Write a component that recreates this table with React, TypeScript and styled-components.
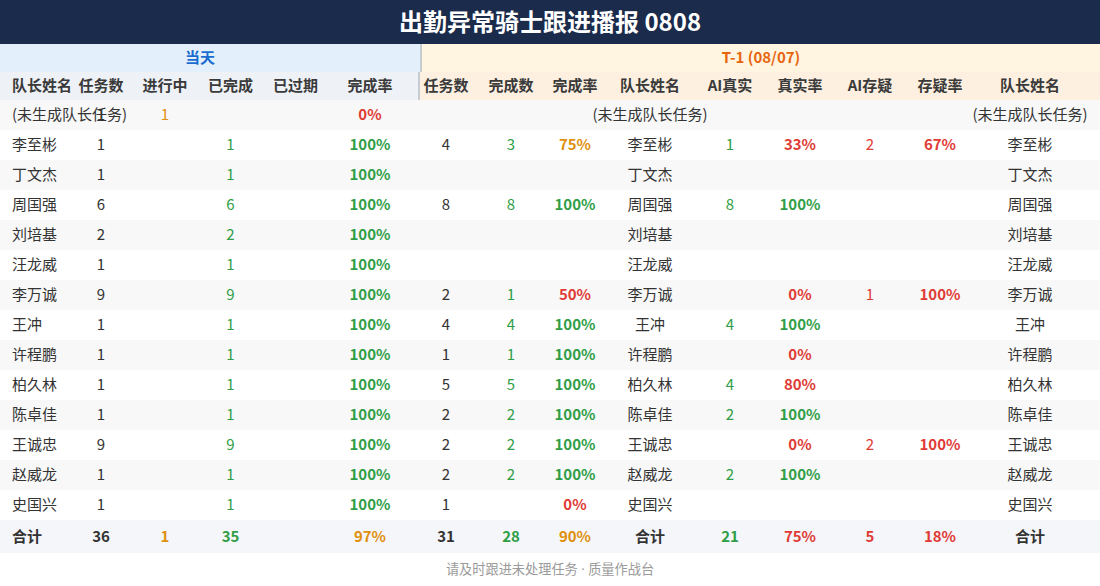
import React from 'react';
import styled, {createGlobalStyle} from "styled-components";

type Tone = 'plain' | 'green' | 'red' | 'orange';

type Cell = { v: string; tone?: Tone; bold?: boolean };

const LEFT_COLS = '62px 78px 50px 81px 49px 100px';
const RIGHT_COLS = '52px 78px 50px 100px 60px 80px 60px 80px 120px';
const COLS = `${LEFT_COLS} ${RIGHT_COLS}`;

const GlobalStyle = createGlobalStyle`
body {
    margin: 0;
    background: #ffffff;
    font-family: "Noto Sans CJK SC", "Noto Sans", sans-serif;
    color: #333333;
}
`

const rate = (v: string): Tone => {
    if (!v) return 'plain';
    const n = parseInt(v, 10);
    if (n === 100) return 'green';
    if (n >= 70) return 'orange';
    return 'red';
};

const realRate = (v: string): Tone => (v === '100%' ? 'green' : 'red');

const makeRow = (r: string[]): Cell[] => [
    {v: r[0]},
    {v: r[1]},
    {v: r[2], tone: 'orange'},
    {v: r[3], tone: 'green'},
    {v: r[4], tone: 'red'},
    {v: r[5], tone: rate(r[5]), bold: true},
    {v: r[6]},
    {v: r[7], tone: 'green'},
    {v: r[8], tone: rate(r[8]), bold: true},
    {v: r[9]},
    {v: r[10], tone: 'green'},
    {v: r[11], tone: realRate(r[11]), bold: true},
    {v: r[12], tone: 'red'},
    {v: r[13], tone: 'red', bold: true},
    {v: r[14]},
];

const ROWS: string[][] = [
    ['(未生成队长任务)', '1', '1', '', '', '0%', '', '', '', '(未生成队长任务)', '', '', '', '', '(未生成队长任务)'],
    ['李至彬', '1', '', '1', '', '100%', '4', '3', '75%', '李至彬', '1', '33%', '2', '67%', '李至彬'],
    ['丁文杰', '1', '', '1', '', '100%', '', '', '', '丁文杰', '', '', '', '', '丁文杰'],
    ['周国强', '6', '', '6', '', '100%', '8', '8', '100%', '周国强', '8', '100%', '', '', '周国强'],
    ['刘培基', '2', '', '2', '', '100%', '', '', '', '刘培基', '', '', '', '', '刘培基'],
    ['汪龙威', '1', '', '1', '', '100%', '', '', '', '汪龙威', '', '', '', '', '汪龙威'],
    ['李万诚', '9', '', '9', '', '100%', '2', '1', '50%', '李万诚', '', '0%', '1', '100%', '李万诚'],
    ['王冲', '1', '', '1', '', '100%', '4', '4', '100%', '王冲', '4', '100%', '', '', '王冲'],
    ['许程鹏', '1', '', '1', '', '100%', '1', '1', '100%', '许程鹏', '', '0%', '', '', '许程鹏'],
    ['柏久林', '1', '', '1', '', '100%', '5', '5', '100%', '柏久林', '4', '80%', '', '', '柏久林'],
    ['陈卓佳', '1', '', '1', '', '100%', '2', '2', '100%', '陈卓佳', '2', '100%', '', '', '陈卓佳'],
    ['王诚忠', '9', '', '9', '', '100%', '2', '2', '100%', '王诚忠', '', '0%', '2', '100%', '王诚忠'],
    ['赵威龙', '1', '', '1', '', '100%', '2', '2', '100%', '赵威龙', '2', '100%', '', '', '赵威龙'],
    ['史国兴', '1', '', '1', '', '100%', '1', '', '0%', '史国兴', '', '', '', '', '史国兴'],
];

const TOTAL: Cell[] = [
    {v: '合计'}, {v: '36'}, {v: '1', tone: 'orange'}, {v: '35', tone: 'green'}, {v: ''},
    {v: '97%', tone: 'orange'}, {v: '31'}, {v: '28', tone: 'green'}, {v: '90%', tone: 'orange'},
    {v: '合计'}, {v: '21', tone: 'green'}, {v: '75%', tone: 'red'}, {v: '5', tone: 'red'},
    {v: '18%', tone: 'red'}, {v: '合计'},
];

const HEADS_TODAY = ['队长姓名', '任务数', '进行中', '已完成', '已过期', '完成率'];
const HEADS_PREV = ['任务数', '完成数', '完成率', '队长姓名', 'AI真实', '真实率', 'AI存疑', '存疑率', '队长姓名'];

const App = () => {
    return (
        <StyledPage>
            <GlobalStyle/>
            <TitleBar>出勤异常骑士跟进播报 0808</TitleBar>
            <GroupRow>
                <GroupCell side="today">当天</GroupCell>
                <GroupCell side="prev">T-1 (08/07)</GroupCell>
            </GroupRow>
            <HeadRow>
                <HeadGroup side="today" cols={LEFT_COLS}>
                    {HEADS_TODAY.map((h, i) => (
                        <HeadCell key={i} first={i === 0}>{h}</HeadCell>
                    ))}
                </HeadGroup>
                <HeadGroup side="prev" cols={RIGHT_COLS}>
                    {HEADS_PREV.map((h, i) => (
                        <HeadCell key={i} last={i === HEADS_PREV.length - 1}>{h}</HeadCell>
                    ))}
                </HeadGroup>
            </HeadRow>
            {ROWS.map((r, ri) => (
                <DataRow key={ri} striped={ri % 2 === 0}>
                    {makeRow(r).map((c, ci) => (
                        <DataCell key={ci} first={ci === 0} last={ci === 14} tone={c.tone ?? 'plain'} bold={c.bold}>
                            {c.v}
                        </DataCell>
                    ))}
                </DataRow>
            ))}
            <TotalRow>
                {TOTAL.map((c, ci) => (
                    <DataCell key={ci} first={ci === 0} last={ci === 14} tone={c.tone ?? 'plain'} bold>
                        {c.v}
                    </DataCell>
                ))}
            </TotalRow>
            <Footer>请及时跟进未处理任务 · 质量作战台</Footer>
        </StyledPage>
    );
};

export default App;

const toneColor: Record<Tone, string> = {
    plain: '#333333',
    green: '#2f9e46',
    red: '#e03b36',
    orange: '#e0900e',
};

const StyledPage = styled.div`
width: 1100px;
height: 586px;
background: #ffffff;
display: flex;
flex-direction: column;
`

const TitleBar = styled.div`
height: 44px;
box-sizing: border-box;
padding-bottom: 3px;
background: #1b2b4b;
color: #ffffff;
font-size: 24px;
font-weight: 700;
display: flex;
align-items: center;
justify-content: center;
`

const GroupRow = styled.div`
display: grid;
grid-template-columns: 420px 680px;
height: 28px;
`

const GroupCell = styled.div<{ side: 'today' | 'prev' }>`
display: flex;
align-items: center;
justify-content: center;
box-sizing: border-box;
padding-bottom: 3px;
font-size: 15px;
font-weight: 700;
background: ${p => p.side === 'today' ? '#e3f0fc' : '#fff5e0'};
color: ${p => p.side === 'today' ? '#1a6ccf' : '#e8650f'};
padding-right: ${p => p.side === 'today' ? '20px' : '0'};
border-left: ${p => p.side === 'prev' ? '2px solid #c7cbd2' : 'none'};
`

const HeadRow = styled.div`
display: grid;
grid-template-columns: 420px 680px;
height: 28px;
`

const HeadGroup = styled.div<{ side: 'today' | 'prev'; cols: string }>`
display: grid;
grid-template-columns: ${p => p.cols};
margin-left: ${p => p.side === 'prev' ? '-2px' : '0'};
background: ${p => p.side === 'today' ? '#eef1f6' : '#fdf0e1'};
border-left: ${p => p.side === 'prev' ? '2px solid #c7cbd2' : 'none'};
`

const HeadCell = styled.div<{ first?: boolean; last?: boolean }>`
display: flex;
align-items: center;
justify-content: ${p => p.first ? 'flex-start' : 'center'};
box-sizing: border-box;
padding-left: ${p => p.first ? '12px' : '0'};
padding-right: ${p => p.last ? '20px' : '0'};
padding-bottom: 3px;
white-space: nowrap;
font-size: 15px;
font-weight: 700;
color: #3a3a3a;
`

const DataRow = styled.div<{ striped?: boolean }>`
display: grid;
grid-template-columns: ${COLS};
height: 30px;
background: ${p => p.striped ? '#f8f8f8' : '#ffffff'};
`

const TotalRow = styled.div`
display: grid;
grid-template-columns: ${COLS};
height: 33px;
background: #f4f6fa;
`

const DataCell = styled.div<{ first?: boolean; last?: boolean; tone: Tone; bold?: boolean }>`
display: flex;
align-items: center;
justify-content: ${p => p.first ? 'flex-start' : 'center'};
box-sizing: border-box;
padding-left: ${p => p.first ? '12px' : '0'};
padding-right: ${p => p.last ? '20px' : '0'};
padding-bottom: 3px;
white-space: nowrap;
font-size: 15px;
font-weight: ${p => p.bold ? 700 : 400};
color: ${p => toneColor[p.tone]};
`

const Footer = styled.div`
flex: 1;
display: flex;
align-items: center;
justify-content: center;
box-sizing: border-box;
padding-bottom: 2px;
font-family: "Noto Sans", "Noto Sans CJK SC", sans-serif;
font-size: 13.2px;
color: #9a9a9a;
`
